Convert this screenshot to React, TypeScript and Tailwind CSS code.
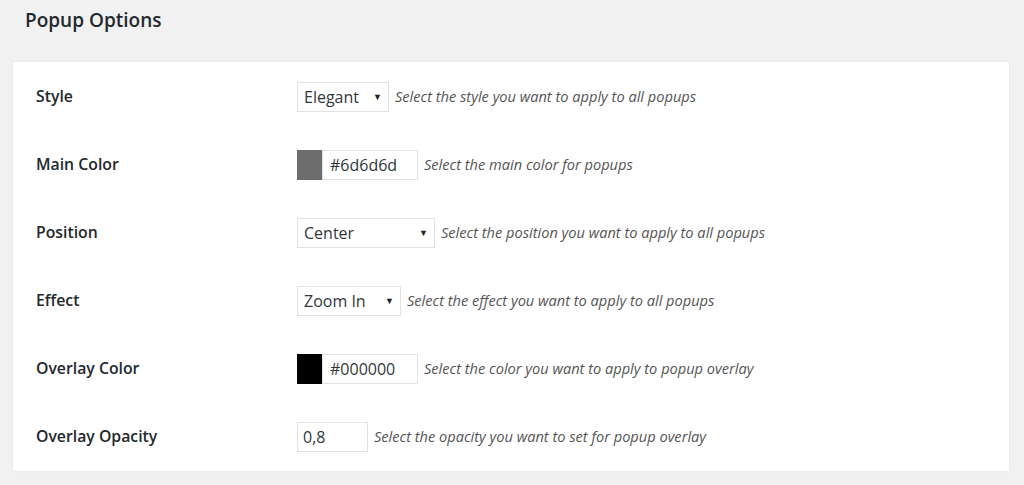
const rows = [
  { label: 'Style', kind: 'select', value: 'Elegant', width: 'w-[92px]', desc: 'Select the style you want to apply to all popups' },
  { label: 'Main Color', kind: 'color', value: '#6d6d6d', swatch: 'bg-[#6d6d6d]', desc: 'Select the main color for popups' },
  { label: 'Position', kind: 'select', value: 'Center', width: 'w-[138px]', desc: 'Select the position you want to apply to all popups' },
  { label: 'Effect', kind: 'select', value: 'Zoom In', width: 'w-[104px]', desc: 'Select the effect you want to apply to all popups' },
  { label: 'Overlay Color', kind: 'color', value: '#000000', swatch: 'bg-black', desc: 'Select the color you want to apply to popup overlay' },
  { label: 'Overlay Opacity', kind: 'text', value: '0,8', desc: 'Select the opacity you want to set for popup overlay' },
];

function Control({ row }: { row: (typeof rows)[number] }) {
  if (row.kind === 'select') {
    return (
      <div className={`flex items-center justify-between h-[30px] pl-[6px] pr-[6px] bg-white border border-[#e2e2e2] text-[16px] text-[#32373c] ${row.width}`}>
        <span>{row.value}</span>
        <span className="text-[9px] text-[#222]">▼</span>
      </div>
    );
  }
  if (row.kind === 'color') {
    return (
      <div className="flex items-center h-[30px]">
        <div className={`w-[25px] h-[30px] ${row.swatch}`} />
        <div className="flex items-center w-[96px] h-[30px] pl-[7px] bg-white border border-[#e2e2e2] text-[16px] text-[#32373c]">
          {row.value}
        </div>
      </div>
    );
  }
  return (
    <div className="flex items-center w-[71px] h-[30px] pl-[5px] bg-white border border-[#e2e2e2] text-[16px] text-[#32373c]">
      {row.value}
    </div>
  );
}

export default function App() {
  return (
    <div className="min-h-[485px] bg-[#f1f1f1] pt-[8px] pl-[13px] pr-[15px]" style={{ fontFamily: '"Open Sans", sans-serif' }}>
      <h2 className="pl-[12px] text-[19px] font-semibold text-[#23282d] leading-[24px] h-[54px]">Popup Options</h2>
      <div className="bg-white shadow-[0_0_2px_rgba(0,0,0,0.06)] pt-px">
        {rows.map((row) => (
          <div key={row.label} className="flex items-center h-[68px]">
            <div className="w-[284px] pl-[23px] text-[15.8px] font-semibold text-[#23282d]">{row.label}</div>
            <Control row={row} />
            <span className="ml-[6px] text-[14.6px] italic text-[#555]">{row.desc}</span>
          </div>
        ))}
      </div>
    </div>
  );
}
